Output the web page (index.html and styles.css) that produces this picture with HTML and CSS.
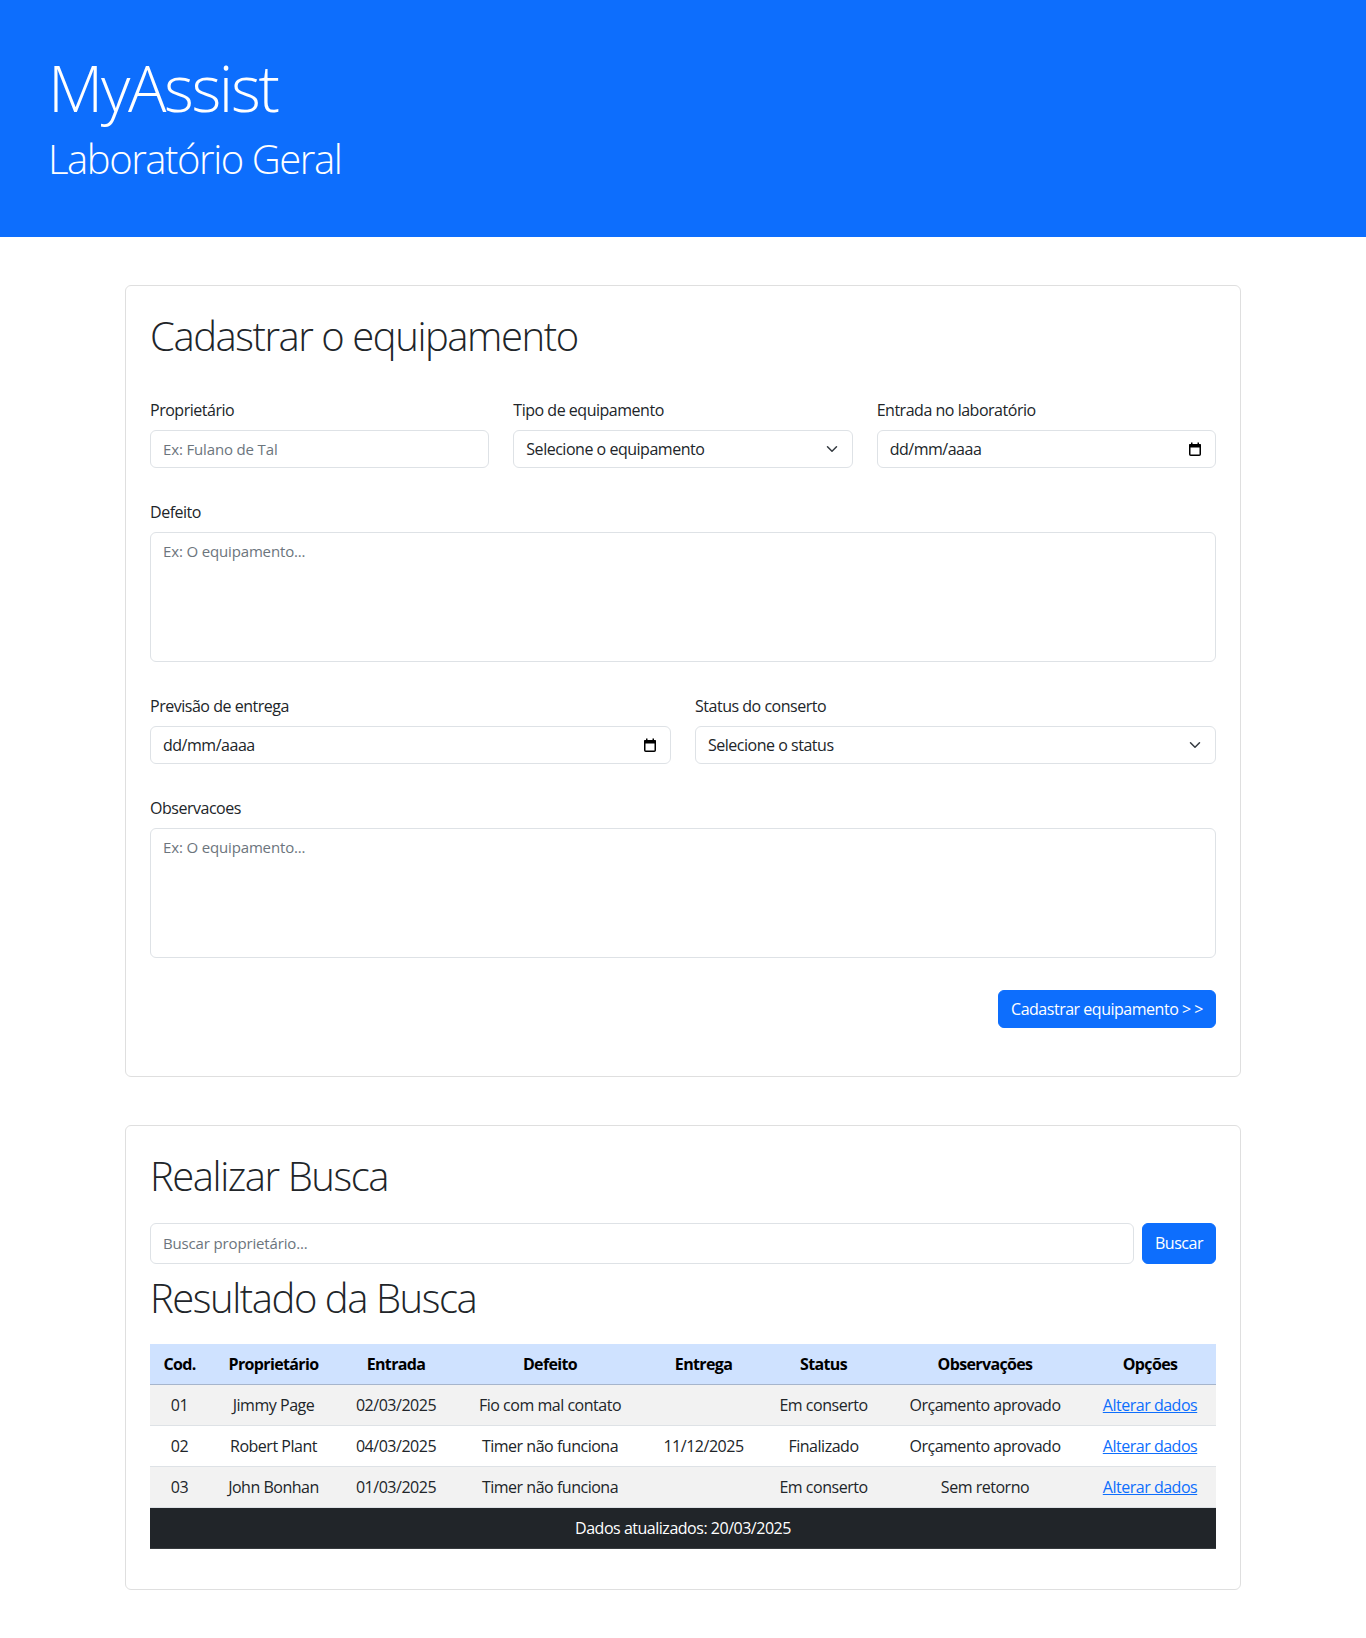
FILE: index.html
```html
<!DOCTYPE html>
<html lang="pt-BR">
<head>
<meta charset="utf-8">
<title>MyAssist</title>
<link rel="stylesheet" href="styles.css">
</head>
<body>
<header class="hero">
  <h1 class="hero-title">MyAssist</h1>
  <h2 class="hero-sub">Laboratório Geral</h2>
</header>

<main class="container">
  <section class="card">
    <h2 class="card-title">Cadastrar o equipamento</h2>
    <form class="form">
      <div class="row row-3">
        <div class="field">
          <label class="label">Proprietário</label>
          <input class="control" type="text" placeholder="Ex: Fulano de Tal">
        </div>
        <div class="field">
          <label class="label">Tipo de equipamento</label>
          <div class="control select">
            <span>Selecione o equipamento</span>
            <svg class="chevron" width="16" height="12" viewBox="0 0 16 16"><path fill="none" stroke="#343a40" stroke-linecap="round" stroke-linejoin="round" stroke-width="2" d="m2 5 6 6 6-6"/></svg>
          </div>
        </div>
        <div class="field">
          <label class="label">Entrada no laboratório</label>
          <div class="control date">
            <span>dd/mm/aaaa</span>
            <svg class="cal" width="14" height="14" viewBox="0 0 14 14"><rect x="1.75" y="2.75" width="10.5" height="10.5" rx="1" fill="none" stroke="#000" stroke-width="1.5"/><rect x="1" y="2" width="12" height="3.5" rx="1" fill="#000"/><rect x="3" y="0.5" width="1.5" height="2" fill="#000"/><rect x="9.5" y="0.5" width="1.5" height="2" fill="#000"/></svg>
          </div>
        </div>
      </div>

      <div class="row">
        <div class="field">
          <label class="label">Defeito</label>
          <textarea class="control area" placeholder="Ex: O equipamento..."></textarea>
        </div>
      </div>

      <div class="row row-2">
        <div class="field">
          <label class="label">Previsão de entrega</label>
          <div class="control date">
            <span>dd/mm/aaaa</span>
            <svg class="cal" width="14" height="14" viewBox="0 0 14 14"><rect x="1.75" y="2.75" width="10.5" height="10.5" rx="1" fill="none" stroke="#000" stroke-width="1.5"/><rect x="1" y="2" width="12" height="3.5" rx="1" fill="#000"/><rect x="3" y="0.5" width="1.5" height="2" fill="#000"/><rect x="9.5" y="0.5" width="1.5" height="2" fill="#000"/></svg>
          </div>
        </div>
        <div class="field">
          <label class="label">Status do conserto</label>
          <div class="control select">
            <span>Selecione o status</span>
            <svg class="chevron" width="16" height="12" viewBox="0 0 16 16"><path fill="none" stroke="#343a40" stroke-linecap="round" stroke-linejoin="round" stroke-width="2" d="m2 5 6 6 6-6"/></svg>
          </div>
        </div>
      </div>

      <div class="row">
        <div class="field">
          <label class="label">Observacoes</label>
          <textarea class="control area" placeholder="Ex: O equipamento..."></textarea>
        </div>
      </div>

      <div class="actions">
        <button type="button" class="btn">Cadastrar equipamento &gt; &gt;</button>
      </div>
    </form>
  </section>

  <section class="card card-search">
    <h2 class="card-title title-search">Realizar Busca</h2>
    <div class="search">
      <input class="control search-input" type="text" placeholder="Buscar proprietário...">
      <button type="button" class="btn btn-search">Buscar</button>
    </div>
    <h2 class="card-title title-result">Resultado da Busca</h2>
    <table class="table">
      <colgroup>
        <col class="w-cod"><col class="w-prop"><col class="w-ent"><col class="w-def">
        <col class="w-entr"><col class="w-stat"><col class="w-obs"><col class="w-opt">
      </colgroup>
      <thead>
        <tr>
          <th>Cod.</th><th>Proprietário</th><th>Entrada</th><th>Defeito</th>
          <th>Entrega</th><th>Status</th><th>Observações</th><th>Opções</th>
        </tr>
      </thead>
      <tbody>
        <tr>
          <td>01</td><td>Jimmy Page</td><td>02/03/2025</td><td>Fio com mal contato</td>
          <td></td><td>Em conserto</td><td>Orçamento aprovado</td><td><a href="#">Alterar dados</a></td>
        </tr>
        <tr>
          <td>02</td><td>Robert Plant</td><td>04/03/2025</td><td>Timer não funciona</td>
          <td>11/12/2025</td><td>Finalizado</td><td>Orçamento aprovado</td><td><a href="#">Alterar dados</a></td>
        </tr>
        <tr>
          <td>03</td><td>John Bonhan</td><td>01/03/2025</td><td>Timer não funciona</td>
          <td></td><td>Em conserto</td><td>Sem retorno</td><td><a href="#">Alterar dados</a></td>
        </tr>
      </tbody>
      <tfoot>
        <tr><td colspan="8">Dados atualizados: 20/03/2025</td></tr>
      </tfoot>
    </table>
  </section>
</main>
</body>
</html>
```

FILE: styles.css
```css
* { box-sizing: border-box; }

body {
  margin: 0;
  font-family: "Open Sans", "Noto Sans", "Liberation Sans", sans-serif;
  font-size: 16px;
  line-height: 1.5;
  letter-spacing: -0.03em;
  color: #212529;
  background: #fff;
}

.hero {
  background: #0d6efd;
  color: #fff;
  padding: 50px 48px 46px;
}
.hero-title {
  margin: 0 0 8px;
  font-size: 64px;
  font-weight: 300;
  line-height: 1.2;
  letter-spacing: -0.037em;
}
.hero-sub {
  margin: 0 0 8px;
  font-size: 40px;
  font-weight: 300;
  line-height: 1.2;
  letter-spacing: -0.036em;
}

.container {
  width: 1140px;
  margin: 48px auto 0;
  padding: 0 12px;
}

.card {
  border: 1px solid #dfdfdf;
  border-radius: 6px;
  padding: 24px;
  margin-bottom: 48px;
}

.card-title {
  margin: 0 0 38px;
  padding-top: 2px;
  font-size: 40px;
  font-weight: 300;
  line-height: 1.2;
  letter-spacing: -0.036em;
  color: #212529;
}

.row { display: grid; grid-template-columns: 1fr; column-gap: 24px; margin-bottom: 32px; }
.row-3 { grid-template-columns: repeat(3, 1fr); }
.row-2 { grid-template-columns: repeat(2, 1fr); }

.field { display: flex; flex-direction: column; min-width: 0; }
.label { display: block; margin-bottom: 8px; }

.control {
  display: block;
  width: 100%;
  height: 38px;
  padding: 6px 12px;
  font-family: inherit;
  font-size: 16px;
  line-height: 24px;
  letter-spacing: -0.03em;
  color: #212529;
  background: #fff;
  border: 1px solid #dee2e6;
  border-radius: 6px;
  outline: none;
}
.control::placeholder { color: #6c757d; font-size: 15px; letter-spacing: -0.01em; }

.select, .date {
  display: flex;
  align-items: center;
  justify-content: space-between;
}
.chevron { flex: none; }
.cal { flex: none; margin-right: 1px; }

.area { height: 130px; resize: none; }

.actions { display: flex; justify-content: flex-end; margin-bottom: 24px; }

.btn {
  height: 38px;
  padding: 6px 12px;
  font-family: inherit;
  font-size: 16px;
  line-height: 24px;
  letter-spacing: -0.03em;
  color: #fff;
  background: #0d6efd;
  border: 1px solid #0d6efd;
  border-radius: 6px;
  cursor: pointer;
}

.title-search { margin-bottom: 23px; }
.search { display: flex; gap: 8px; }
.search-input { flex: 1; height: 41px; }
.btn-search { height: 41px; }
.title-result { margin: 8px 0 22px; }

.table {
  width: 100%;
  border-collapse: collapse;
  table-layout: fixed;
  margin-bottom: 16px;
}
.w-cod { width: 59px; }
.w-prop { width: 129px; }
.w-ent { width: 116px; }
.w-def { width: 192px; }
.w-entr { width: 115px; }
.w-stat { width: 125px; }
.w-obs { width: 198px; }
.w-opt { width: 132px; }

.table th,
.table td {
  padding: 8px;
  text-align: center;
  line-height: 24px;
  border-bottom: 1px solid #dee2e6;
  white-space: nowrap;
}
.table thead tr { background: #cfe2ff; }
.table th { color: #000; font-weight: 700; letter-spacing: -0.04em; border-bottom-color: #a6b5cc; }
.table tbody tr:nth-child(odd) { background: #f2f2f2; }
.table tfoot td { background: #212529; color: #fff; border-bottom-color: #373b3e; }
.table a { color: #0d6efd; text-decoration: underline; }
```
